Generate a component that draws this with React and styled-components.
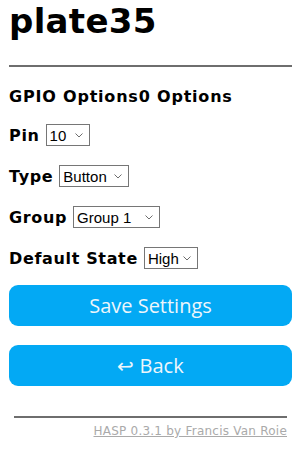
import React from "react";
import styled, { createGlobalStyle } from "styled-components";

const GlobalStyle = createGlobalStyle`
  html, body {
    margin: 0;
    padding: 0;
    background: #fff;
  }
  body {
    font-family: "DejaVu Sans", Verdana, sans-serif;
    color: #000;
  }
`;

const fields = [
  { label: "Pin", options: ["10", "11", "12", "13"], width: 44 },
  { label: "Type", options: ["Button", "Switch", "Relay"], width: 70 },
  { label: "Group", options: ["Group 1", "Group 2", "Group 3"], width: 87 },
  { label: "Default State", options: ["High", "Low"], width: 54 },
];

export default function App() {
  return (
    <>
      <GlobalStyle />
      <S.Page>
        <S.Title>plate35</S.Title>
        <S.Rule />
        <S.Heading>GPIO Options0 Options</S.Heading>
        <S.Form>
          {fields.map((f) => (
            <Field key={f.label} {...f} />
          ))}
          <S.Button type="button">Save Settings</S.Button>
          <S.Button type="button">↩ Back</S.Button>
        </S.Form>
        <S.Footer>
          <S.FooterRule />
          <S.Credit href="#">HASP 0.3.1 by Francis Van Roie</S.Credit>
        </S.Footer>
      </S.Page>
    </>
  );
}

const Field = ({ label, options, width }) => (
  <S.Row>
    <S.Label>{label}</S.Label>
    <S.SelectBox $width={width}>
      <S.Select defaultValue={options[0]}>
        {options.map((o) => (
          <option key={o}>{o}</option>
        ))}
      </S.Select>
      <S.Chevron width="8" height="5" viewBox="0 0 8 5">
        <polyline points="0.5,0.5 4,4 7.5,0.5" fill="none" stroke="#6d6d6d" strokeWidth="1" />
      </S.Chevron>
    </S.SelectBox>
  </S.Row>
);

const S = {
  Page: styled.div`
    padding: 0 8px 0 9px;
    display: flex;
    flex-direction: column;
  `,
  Title: styled.h1`
    margin: 0;
    padding-top: 1px;
    font-size: 34px;
    line-height: 40px;
    font-weight: bold;
    letter-spacing: 0.3px;
  `,
  Rule: styled.div`
    margin-top: 24px;
    height: 2px;
    background: #6e6e6e;
  `,
  Heading: styled.h3`
    margin: 21px 0 0;
    font-size: 16px;
    line-height: 18px;
    font-weight: bold;
    letter-spacing: 0.8px;
  `,
  Form: styled.div`
    display: flex;
    flex-direction: column;
  `,
  Row: styled.div`
    display: flex;
    align-items: center;
    gap: 6px;
    margin-top: 18px;
    height: 22px;
    & + & {
      margin-top: 19px;
    }
  `,
  Label: styled.span`
    font-size: 16px;
    font-weight: bold;
    letter-spacing: 0.65px;
  `,
  SelectBox: styled.div`
    position: relative;
    width: ${(p) => p.$width}px;
    height: 22px;
  `,
  Select: styled.select`
    appearance: none;
    width: 100%;
    height: 100%;
    box-sizing: border-box;
    font-family: "Liberation Sans", Arial, sans-serif;
    font-size: 15px;
    padding: 0 0 0 3px;
    border: 1px solid #767676;
    border-radius: 0;
    background: #fff;
    color: #000;
    outline: none;
  `,
  Chevron: styled.svg`
    position: absolute;
    right: 7px;
    top: 9px;
    pointer-events: none;
  `,
  Button: styled.button`
    margin-top: 19px;
    height: 41px;
    border: 0;
    border-radius: 9px;
    background: #03a9f4;
    color: #eef6fb;
    font-family: "Open Sans", "Noto Sans", sans-serif;
    font-size: 20px;
    cursor: pointer;
    &:first-of-type {
      margin-top: 16px;
    }
  `,
  Footer: styled.div`
    margin-top: 30px;
    padding: 0 5px;
    display: flex;
    flex-direction: column;
    align-items: flex-end;
  `,
  FooterRule: styled.div`
    align-self: stretch;
    height: 2px;
    background: #6e6e6e;
  `,
  Credit: styled.a`
    margin-top: 6px;
    font-size: 12px;
    letter-spacing: 0.23px;
    color: #aaa;
    text-decoration: underline;
  `,
};
